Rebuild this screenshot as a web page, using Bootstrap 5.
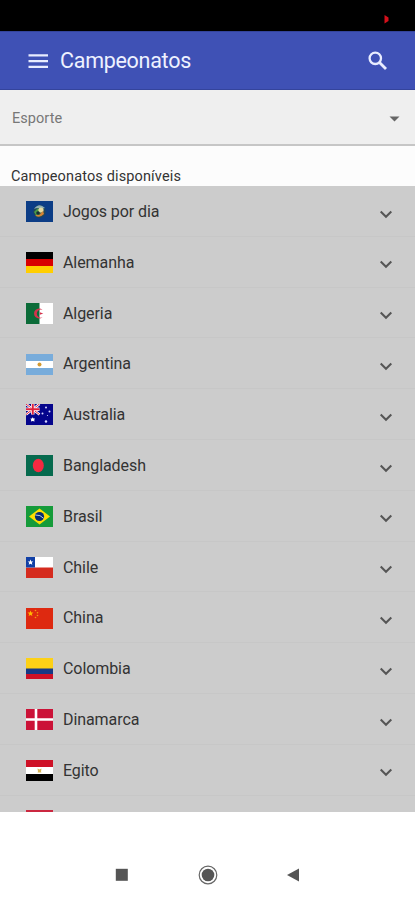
<!DOCTYPE html>
<html lang="pt-BR">
<head>
<meta charset="utf-8">
<meta name="viewport" content="width=device-width, initial-scale=1">
<title>Campeonatos</title>
<link href="https://cdn.jsdelivr.net/npm/bootstrap@5.3.0/dist/css/bootstrap.min.css" rel="stylesheet">
<style>
body{font-family:Roboto,"Liberation Sans",sans-serif;height:900px;background:#fff;color:#333}
body>*{flex:none}
svg{display:block;flex:none}
.status-bar{height:31px;background:#000;padding:15px 26px 0 0}
.app-bar{height:59px;background:#3f51b5;border-top:1px solid #34449c;border-bottom:1px solid #34449c;padding:1px 28px 0}
.app-title{font-size:21.5px;line-height:28px;color:#eef1ff;letter-spacing:-.28px;margin-left:11px}
.sport-select{height:56px;background:#efefef;border-bottom:2px solid #c6c6c6;padding:3px 15px 0 12px;font-size:14.5px;color:#777;letter-spacing:.05px}
.list-title{height:40px;background:#fcfcfc;font-size:14.5px;line-height:20px;padding:21px 0 0 11px;letter-spacing:.14px}
.country-list{height:626px;background:#ccc}
.country-row{height:50.8px;flex:none;padding:1.5px 22px 0 25.5px;border-bottom:1px solid #c7c7c7;font-size:16px;line-height:20px}
.country-row:last-child{align-items:flex-start;padding-top:14.4px}
.country-name{margin-left:10.5px;letter-spacing:-.08px;padding-top:.8px}
.country-row .chev{margin-top:5px}
.nav-keys{height:51px;margin-top:37px;padding:1px 115px 0 115px}
</style>
</head>
<body class="d-flex flex-column overflow-hidden">
<div class="status-bar d-flex justify-content-end"><svg width="6" height="9" viewBox="0 0 6 9"><path d="M1.500 0L5.500 2.500V6L1.500 8.500Z" fill="#d3101b"/></svg></div>
<nav class="app-bar d-flex align-items-center">
<svg width="21" height="16" viewBox="0 0 21 16" fill="#e8ecff"><path d="M.5 1.2h19.5v2.2H.5zM.5 7h19.5v2.2H.5zM.5 12.8h19.5V15H.5z"/></svg>
<span class="app-title">Campeonatos</span>
<svg class="ms-auto" width="19" height="20" viewBox="0 0 19 20" fill="none" stroke="#e8ecff"><circle cx="7.3" cy="7.3" r="5.7" stroke-width="2.3"/><path d="M11.5 11.5L18 18" stroke-width="2.9"/></svg>
</nav>
<div class="sport-select d-flex align-items-center justify-content-between"><span>Esporte</span><svg width="11" height="6" viewBox="0 0 11 6"><path d="M.5 .5h10L5.500 5.500z" fill="#666"/></svg></div>
<div class="list-title">Campeonatos disponíveis</div>
<div class="country-list d-flex flex-column overflow-hidden" id="list"></div>
<div class="nav-keys d-flex align-items-center justify-content-between">
<svg width="14" height="14" viewBox="0 0 14 14"><rect x=".8" y=".8" width="12" height="12" fill="#555"/></svg>
<svg width="20" height="20" viewBox="0 0 20 20"><circle cx="10" cy="10" r="8.800" fill="#fff" stroke="#666" stroke-width="1.200"/><circle cx="10" cy="10" r="6.300" fill="#555"/></svg>
<svg width="14" height="16" viewBox="0 0 14 16"><path d="M13 1.500V14.500L1 8z" fill="#555"/></svg>
</div>
<script>
// Each flag is drawn on a 27 x 21 grid.
const bands = (...c) => c.map((f, i) => `<rect y="${i*7}" width="27" height="7" fill="${f}"/>`).join('');
const base = f => `<rect width="27" height="21" fill="${f}"/>`;
const rows = [
 ['Jogos por dia', base('#0c3d86') + '<ellipse cx="13.5" cy="10.500" rx="6.200" ry="6.500" fill="#20465a"/><path d="M8 8Q13 1 19 7L15 8Q12 6 8 8" fill="#8eaeb5"/><path d="M8 11l4-4 3 4-4 5z" fill="#4b9c48"/><circle cx="15" cy="9" r="2.600" fill="#e4d9a0"/><path d="M9 14q4 4 9-1l-1-3-4 4z" fill="#d48434"/><circle cx="12" cy="12" r="1.800" fill="#172e35"/>'],
 ['Alemanha', bands('#000', '#d80000', '#ffce00')],
 ['Algeria', base('#fff') + '<rect width="13.500" height="21" fill="#0b6b38"/><path d="M16.500 7a5 5 0 1 0 0 7.200a4 4 0 1 1 0-7.200" fill="#d5324c"/><path d="M17.300 10.500l-3.500 1.200V9.300z" fill="#d5324c"/>'],
 ['Argentina', bands('#78acdb', '#fff', '#78acdb') + '<circle cx="13.500" cy="10.500" r="2" fill="#d39b35"/>'],
 ['Australia', base('#05058c') + '<path d="M0 0l13.500 10.500M13.500 0L0 10.500" stroke="#fff" stroke-width="2.500"/><path d="M0 0l13.500 10.500M13.500 0L0 10.500" stroke="#e0203c" stroke-width="1"/><path d="M6.750 0v10.500M0 5.250h13.500" stroke="#fff" stroke-width="3.500"/><path d="M6.750 0v10.500M0 5.250h13.500" stroke="#e0203c" stroke-width="2"/><path d="M6.700 13.300l.8 1.300 1.500 0-.8 1.400.4 1.600-1.900-.7-1.800.7.300-1.600-.8-1.400 1.500 0z" fill="#fff"/><g fill="#d8d8ff"><circle cx="20" cy="3.500" r="1"/><circle cx="16.500" cy="9.500" r="1"/><circle cx="23.500" cy="7.500" r="1"/><circle cx="21.500" cy="11.500" r=".6"/><circle cx="20" cy="17.500" r="1.200"/></g>'],
 ['Bangladesh', base('#066a4e') + '<ellipse cx="12.300" cy="10.500" rx="5.500" ry="6.800" fill="#f42a41"/>'],
 ['Brasil', base('#159b3a') + '<path d="M3 10.500L13.500 2.500 24 10.500 13.500 18.500z" fill="#fedf00"/><circle cx="13.500" cy="10.500" r="4.600" fill="#092c73"/><path d="M9.300 9q5-.5 8.300 3.300" fill="none" stroke="#b9cbd9" stroke-width="1"/>'],
 ['Chile', base('#fff') + '<path d="M0 10.500h27V21H0z" fill="#d52b1e"/><path d="M0 0h9v10.500H0z" fill="#1140a6"/><path d="M4.500 2.500l.8 1.900 2 .1-1.500 1.300.5 2-1.800-1.100-1.800 1.100.5-2-1.500-1.300 2-.1z" fill="#fff"/>'],
 ['China', base('#de2910') + '<path d="M4.500 2.500l.8 2 2.200.1L5.800 6l.6 2.100-1.900-1.200-1.900 1.200.6-2.100-1.700-1.400 2.200-.1z" fill="#ffb800"/><g fill="#f59b12"><circle cx="9.500" cy="2.500" r=".8"/><circle cx="11.500" cy="4.800" r=".8"/><circle cx="11.500" cy="7.500" r=".8"/><circle cx="9.500" cy="9.500" r=".8"/></g>'],
 ['Colombia', base('#fdd116') + '<path d="M0 10.500h27v5.500H0z" fill="#173985"/><path d="M0 16h27v5H0z" fill="#ce1126"/>'],
 ['Dinamarca', base('#cb1237') + '<path d="M10 0v21M0 10.500h27" stroke="#fff" stroke-width="2.600"/>'],
 ['Egito', bands('#ce1126', '#fff', '#000') + '<path d="M11.500 8.500l2 1 2-1-.5 3 .5 1h-4l.5-1z" fill="#d7b557"/>'],
 ['', base('#cb2840')]
];
document.getElementById('list').innerHTML = rows.map(([n, f]) => `<div class="country-row d-flex${n ? ' align-items-center' : ''}"><svg width="27" height="21" viewBox="0 0 27 21">${f}</svg><span class="country-name">${n}</span><svg class="chev ms-auto" width="14" height="9" viewBox="0 0 14 9"><path d="M1.700 1.500L7 6.800l5.300-5.300" fill="none" stroke="#555" stroke-width="2"/></svg></div>`).join('');
</script>
<script src="https://cdn.jsdelivr.net/npm/bootstrap@5.3.0/dist/js/bootstrap.bundle.min.js"></script>
</body>
</html>
